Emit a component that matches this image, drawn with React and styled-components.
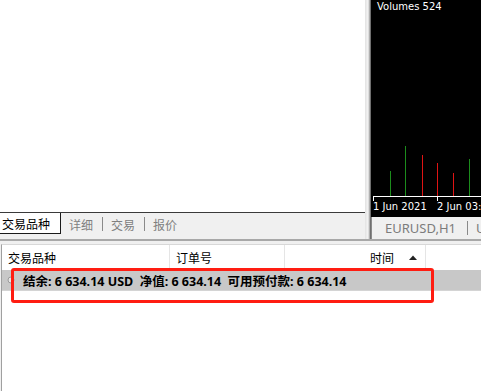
import React from "react";
import styled, { createGlobalStyle } from "styled-components";

const Global = createGlobalStyle`
  html, body {
    margin: 0;
    padding: 0;
    background: #ffffff;
    overflow: hidden;
  }
  body {
    font-family: "Noto Sans", "Noto Sans CJK SC", sans-serif;
    font-size: 12px;
  }
`;

const Screen = styled.div`
  position: relative;
  width: 481px;
  height: 391px;
  overflow: hidden;
  display: flex;
  flex-direction: column;
`;

const Top = styled.div`
  display: flex;
  height: 239px;
  flex-shrink: 0;
`;

const LeftPane = styled.div`
  width: 365px;
  display: flex;
  flex-direction: column;
`;

const Blank = styled.div`
  height: 212px;
  background: #ffffff;
  border-bottom: 1px solid #3a3a3a;
`;

const TabStrip = styled.div`
  flex: 1;
  display: flex;
  align-items: flex-start;
  background: #f0f0f0;
  overflow: hidden;
  white-space: nowrap;
`;

const Tab = styled.div`
  height: ${p => (p.$active ? "20px" : "18px")};
  display: flex;
  align-items: center;
  padding: ${p => (p.$active ? "0 10px 0 2px" : "0 8px")};
  font-family: "Noto Sans CJK SC", sans-serif;
  font-size: 12px;
  color: ${p => (p.$active ? "#000000" : "#808080")};
  background: ${p => (p.$active ? "#ffffff" : "transparent")};
  border-right: 1px solid ${p => (p.$active ? "#1a1a1a" : "transparent")};
  border-bottom: ${p => (p.$active ? "1px solid #1a1a1a" : "none")};
  margin-top: ${p => (p.$active ? "0" : "2px")};
`;

const TabSep = styled.div`
  width: 1px;
  height: 14px;
  margin-top: ${p => (p.$flat ? "0" : "4px")};
  background: #8a8a8a;
  flex-shrink: 0;
`;

const Splitter = styled.div`
  width: 6px;
  background: linear-gradient(
    to right,
    #e2e2e2 0%,
    #f4f4f4 50%,
    #b0b0b0 75%,
    #505050 100%
  );
`;

const RightPane = styled.div`
  flex: 1;
  display: flex;
  flex-direction: column;
  min-width: 0;
`;

const Chart = styled.div`
  position: relative;
  height: 217px;
  background: #000000;
`;

const ChartTitle = styled.div`
  position: absolute;
  left: 6px;
  top: 1px;
  color: #ffffff;
  font-family: "DejaVu Sans", sans-serif;
  font-size: 10px;
`;

const ChartTabs = styled.div`
  flex: 1;
  display: flex;
  align-items: center;
  padding-left: 3px;
  background: #f0f0f0;
  border-left: 1px solid #8a8a8a;
  overflow: hidden;
  white-space: nowrap;
`;

const ChartTab = styled.div`
  padding: 0 11px 0 ${p => (p.$next ? "8px" : "10px")};
  font-size: 13px;
  color: #7c7c7c;
  flex-shrink: 0;
`;

const Bottom = styled.div`
  flex: 1;
  display: flex;
  flex-direction: column;
  border-top: 2px solid #a8a8a8;
  background: #f0f0f0;
  padding: 3px 0 0 1px;
`;

const Table = styled.div`
  flex: 1;
  background: #ffffff;
  border-left: 1px solid #a0a0a0;
  border-top: 1px solid #d8d8d8;
`;

const HeadRow = styled.div`
  display: flex;
  height: 25px;
`;

const HeadCell = styled.div`
  width: ${p => p.$w}px;
  flex-shrink: 0;
  display: flex;
  align-items: center;
  justify-content: ${p => (p.$right ? "flex-end" : "flex-start")};
  gap: 15px;
  padding: 0 ${p => (p.$right ? "8px" : "6px")};
  box-sizing: border-box;
  border-right: 1px solid #e5e5e5;
  font-family: "Noto Sans CJK SC", sans-serif;
  font-size: 12px;
  color: #000000;
`;

const Row = styled.div`
  display: flex;
  align-items: center;
  height: 20px;
  background: #c8c8c8;
  border-bottom: 1px solid #d4d4d4;
  padding-left: 5px;
  gap: 8px;
`;

const RowText = styled.span`
  font-family: "Noto Sans", "Noto Sans CJK SC", sans-serif;
  font-weight: 700;
  font-size: 12.5px;
  color: #000000;
  white-space: pre;
`;

const Highlight = styled.div`
  position: absolute;
  left: 11px;
  top: 268px;
  width: 423px;
  height: 35px;
  box-sizing: border-box;
  border: 3px solid #ff1d12;
  border-radius: 3px;
  pointer-events: none;
`;

const bars = [
  { x: 19, top: 171, c: "#1c8c1c" },
  { x: 34, top: 146, c: "#1c8c1c" },
  { x: 51, top: 155, c: "#e01414" },
  { x: 66, top: 163, c: "#e01414" },
  { x: 82, top: 173, c: "#e01414" },
  { x: 98, top: 159, c: "#1c8c1c" },
];

const VolumeChart = () => (
  <svg width="110" height="217" style={{ position: "absolute", left: 0, top: 0 }}>
    {bars.map(b => (
      <line key={b.x} x1={b.x + 0.5} x2={b.x + 0.5} y1={b.top} y2={196} stroke={b.c} strokeWidth="1" />
    ))}
    <line x1="2" x2="110" y1="196.5" y2="196.5" stroke="#ffffff" strokeWidth="1" />
    <line x1="2.5" x2="2.5" y1="196" y2="201" stroke="#ffffff" strokeWidth="1" />
    <line x1="66.5" x2="66.5" y1="196" y2="201" stroke="#ffffff" strokeWidth="1" />
    <text x="2" y="210" fill="#ffffff" fontFamily="DejaVu Sans, sans-serif" fontSize="10">1 Jun 2021</text>
    <text x="66" y="210" fill="#ffffff" fontFamily="DejaVu Sans, sans-serif" fontSize="10">2 Jun 03:00</text>
  </svg>
);

const SortUp = () => (
  <svg width="8" height="5" viewBox="0 0 8 5">
    <path d="M0 5 L4 0.5 L8 5 Z" fill="#222" />
  </svg>
);

const Dot = () => (
  <svg width="8" height="8" viewBox="0 0 8 8">
    <circle cx="4" cy="4" r="3" fill="#e6e6e6" stroke="#9a9a9a" strokeWidth="1" />
  </svg>
);

export default function App() {
  return (
    <>
      <Global />
      <Screen>
        <Top>
          <LeftPane>
            <Blank />
            <TabStrip>
              <Tab $active>交易品种</Tab>
              <Tab>详细</Tab>
              <TabSep />
              <Tab>交易</Tab>
              <TabSep />
              <Tab>报价</Tab>
            </TabStrip>
          </LeftPane>
          <Splitter />
          <RightPane>
            <Chart>
              <ChartTitle>Volumes 524</ChartTitle>
              <VolumeChart />
            </Chart>
            <ChartTabs>
              <ChartTab>EURUSD,H1</ChartTab>
              <TabSep $flat />
              <ChartTab $next>USDCHF,H1</ChartTab>
            </ChartTabs>
          </RightPane>
        </Top>
        <Bottom>
          <Table>
            <HeadRow>
              <HeadCell $w={168}>交易品种</HeadCell>
              <HeadCell $w={115}>订单号</HeadCell>
              <HeadCell $w={141} $right>
                <span>时间</span>
                <SortUp />
              </HeadCell>
            </HeadRow>
            <Row>
              <Dot />
              <RowText>结余: 6 634.14 USD  净值: 6 634.14  可用预付款: 6 634.14</RowText>
            </Row>
          </Table>
        </Bottom>
        <Highlight />
      </Screen>
    </>
  );
}
